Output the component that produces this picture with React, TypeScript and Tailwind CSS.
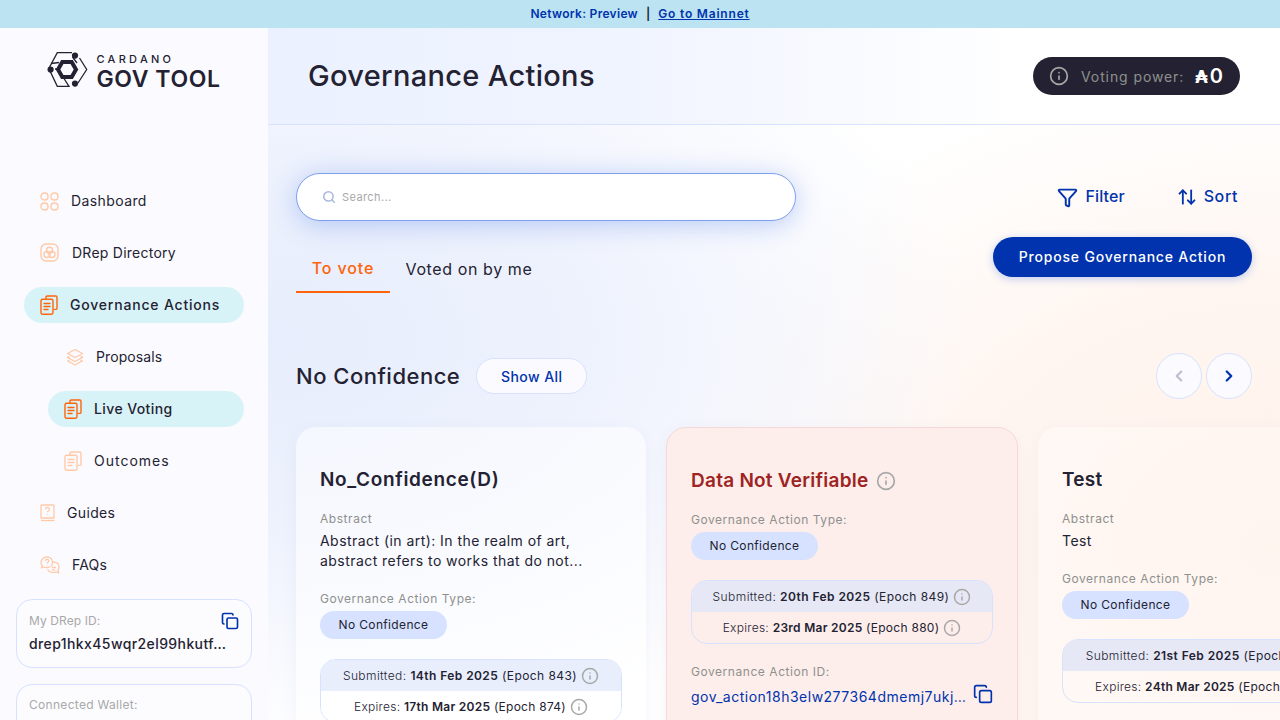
import React from "react";
import { Info, Copy, Funnel, ArrowUpDown, Search, ChevronLeft, ChevronRight } from "lucide-react";

const LIGHT = "#ffc9a8";
const HOT = "#ff640a";

function Logo() {
  return (
    <svg width="41" height="36" viewBox="0 0 41 36" fill="none" className="shrink-0">
      <g stroke="#242232" strokeWidth="1.3">
        <path d="M25 0.7H10.300L1.800 16.500 10.300 34.300H22L17 26.500" />
        <path d="M32.500 6L39.700 17.500 31 31" />
        <path d="M4 11.500L12 10.500M30 11L25.500 5M8 17h3" />
      </g>
      <path d="M15.300 10h9.400l4.300 7.500-4.300 7.500h-9.400L11 17.500z" stroke="#242232" strokeWidth="4" fill="none" />
      <circle cx="28" cy="3.600" r="3.100" fill="#242232" />
      <circle cx="3.600" cy="17.500" r="3.100" fill="#242232" />
      <circle cx="28" cy="31.600" r="3.100" fill="#242232" />
    </svg>
  );
}

function DashIcon() {
  return (
    <svg width="19" height="19" viewBox="0 0 19 19" fill="none" stroke={LIGHT} strokeWidth="1.4">
      <rect x="1" y="1" width="7" height="7" rx="3.200" />
      <rect x="11" y="1" width="7" height="7" rx="3.200" />
      <rect x="1" y="11" width="7" height="7" rx="3.200" />
      <rect x="11" y="11" width="7" height="7" rx="3.200" />
    </svg>
  );
}
function DrepIcon() {
  return (
    <svg width="20" height="20" viewBox="0 0 20 20" fill="none" stroke={LIGHT} strokeWidth="1.4">
      <rect x="1" y="1" width="17" height="17" rx="5" />
      <circle cx="9.500" cy="7.200" r="3" />
      <circle cx="7" cy="11.500" r="3" />
      <circle cx="12" cy="11.500" r="3" />
    </svg>
  );
}
function DocsIcon({ color }: { color: string }) {
  return (
    <svg width="18" height="20" viewBox="0 0 18 20" fill="none" stroke={color} strokeWidth="1.4" strokeLinecap="round">
      <path d="M6 3.500V2.200C6 1.500 6.500 1 7.200 1h8.600c.7 0 1.200.5 1.200 1.200v11c0 .7-.5 1.200-1.200 1.200h-1.300" />
      <rect x="1" y="4.200" width="12" height="15" rx="1.600" />
      <path d="M4 8.500h6M4 11.500h6M4 14.500h4" />
    </svg>
  );
}
function LayersIcon() {
  return (
    <svg width="18" height="18" viewBox="0 0 18 18" fill="none" stroke={LIGHT} strokeWidth="1.4" strokeLinejoin="round">
      <path d="M9 1.500L1.500 5.500 9 9.500l7.500-4z" />
      <path d="M3.500 8.500L1.500 9.500 9 13.500l7.500-4-2-1" />
      <path d="M3.500 12L1.800 13 9 17l7.200-4-1.700-1" />
    </svg>
  );
}
function GuideIcon() {
  return (
    <svg width="15" height="18" viewBox="0 0 15 18" fill="none" stroke={LIGHT} strokeWidth="1.3">
      <path d="M1 14V1.800C1 1.300 1.300 1 1.800 1h11.400c.5 0 .8.3.8.8V14z" />
      <path d="M1 16.500h13.500" />
      <path d="M5.600 5.200c0-2.400 3.800-2.200 3.800 0 0 1.500-1.900 1.400-1.900 3M7.500 10v.8" />
    </svg>
  );
}
function FaqIcon() {
  return (
    <svg width="20" height="18" viewBox="0 0 20 18" fill="none" stroke={LIGHT} strokeWidth="1.3" strokeLinejoin="round">
      <path d="M7 1c-3.300 0-6 2.400-6 5.400 0 1.300.5 2.400 1.300 3.300L1.500 12l2.800-1c.8.4 1.700.6 2.700.6 3.300 0 5.500-2.200 5.500-5.200S10.300 1 7 1z" />
      <path d="M13 6c3.300 0 6 2 6 5 0 1.200-.4 2.200-1 3l.8 3-3-1.200" />
      <path d="M15.800 15.800C13 17 9 16.500 7.500 13.500" />
      <path d="M5.200 5c0-2.200 3.600-2 3.600 0 0 1.300-1.800 1.200-1.800 2.600M7 9v.6" />
      <path d="M12 11.500h4M12 13.800h3" />
    </svg>
  );
}

type NavItem = { label: string; icon: React.ReactNode; active?: boolean; sub?: boolean; track: string };
const NAV: NavItem[] = [
  { label: "Dashboard", icon: <DashIcon />, track: "tracking-[0.4px]" },
  { label: "DRep Directory", icon: <DrepIcon />, track: "tracking-[0.25px]" },
  { label: "Governance Actions", icon: <DocsIcon color={HOT} />, active: true, track: "tracking-[0.8px]" },
  { label: "Proposals", icon: <span className="flex pl-[2px]"><LayersIcon /></span>, sub: true, track: "tracking-[0.1px]" },
  { label: "Live Voting", icon: <DocsIcon color={HOT} />, active: true, sub: true, track: "tracking-[0.4px]" },
  { label: "Outcomes", icon: <DocsIcon color={LIGHT} />, sub: true, track: "tracking-[1px]" },
  { label: "Guides", icon: <GuideIcon />, track: "tracking-[0.35px]" },
  { label: "FAQs", icon: <FaqIcon />, track: "tracking-[0.2px]" },
];

function InfoDot({ size = 18 }: { size?: number }) {
  return <Info size={size} strokeWidth={2} color="#a8a8a8" className="shrink-0" />;
}

function Label({ children }: { children: React.ReactNode }) {
  return <div className="text-[12px] leading-[18px] tracking-[0.55px] text-[#8e908e]">{children}</div>;
}

function TypePill() {
  return (
    <div className="mt-[3px] flex h-7 w-[127px] items-center justify-center rounded-full bg-[#d6e2ff] text-[12px] tracking-[0.35px] text-[#242232]">
      No Confidence
    </div>
  );
}

function Dates({ sub, exp, epochS, epochE, top, bottom }: { sub: string; exp: string; epochS: string; epochE: string; top: string; bottom: string }) {
  return (
    <div className="h-[64px] w-[302px] overflow-hidden rounded-[16px] border border-[#d6e2ff] text-[12px] text-[#242232]">
      <div className={"flex h-[31px] items-center justify-center gap-[4px] " + top}>
        <span className="tracking-[0.42px] whitespace-nowrap">
          <span className="font-light">Submitted: </span>
          <span className="font-semibold">{sub}</span>
          <span> (Epoch {epochS})</span>
        </span>
        <InfoDot />
      </div>
      <div className={"flex h-[31px] items-center justify-center gap-[4px] " + bottom}>
        <span className="tracking-[0.27px] whitespace-nowrap">
          <span className="font-light">Expires: </span>
          <span className="font-semibold">{exp}</span>
          <span> (Epoch {epochE})</span>
        </span>
        <InfoDot />
      </div>
    </div>
  );
}

function Abstract({ lines }: { lines: string[] }) {
  return (
    <div className="mt-[16px]">
      <Label>Abstract</Label>
      <div className="mt-[3px] text-[14px] leading-[20px] tracking-[0.45px] text-[#242232]">
        {lines.map((l) => (
          <div key={l}>{l}</div>
        ))}
      </div>
    </div>
  );
}

export default function App() {
  return (
    <div className="flex h-screen w-screen flex-col overflow-hidden font-[Inter,sans-serif] text-[#242232]">
      <div className="flex h-7 shrink-0 items-center justify-center gap-2 bg-[#bbe3f1] text-[12px] font-semibold text-[#0033ad]">
        <span className="tracking-[0.3px]">Network: Preview</span>
        <span className="text-[#242232]">|</span>
        <span className="tracking-[0.8px] underline">Go to Mainnet</span>
      </div>
      <div className="flex min-h-0 flex-1">
        <aside className="flex w-[268px] shrink-0 flex-col bg-[#fbfbff] px-4">
          <div className="flex h-[59px] items-start justify-center gap-2 pt-6">
            <Logo />
            <div className="flex flex-col pt-[1px]">
              <span className="text-[11px] leading-[13px] font-medium tracking-[3.300px] text-[#242232]">CARDANO</span>
              <span className="mt-[1px] text-[23px] leading-[24px] font-semibold tracking-[0.6px] whitespace-nowrap text-[#242232]">GOV TOOL</span>
            </div>
          </div>
          <nav className="mt-[96px] flex flex-col gap-4 px-2">
            {NAV.map((n) => (
              <div
                key={n.label}
                className={
                  "flex h-9 items-center gap-3 rounded-full pl-4 text-[14px] " +
                  n.track +
                  " " +
                  (n.sub ? "ml-6 " : "") +
                  (n.active ? "bg-[#d8f3f7] font-medium" : "")
                }
              >
                <span className="flex shrink-0">{n.icon}</span>
                <span className="pb-[1px] whitespace-nowrap">{n.label}</span>
              </div>
            ))}
          </nav>
          <div className="relative mt-4 h-[69px] shrink-0 rounded-[16px] border border-[#d6e2ff] bg-white/40 px-3 pt-[12px]">
            <div className="text-[12px] leading-[18px] tracking-[0.1px] text-[#a8a8a8]">My DRep ID:</div>
            <div className="mt-[3px] text-[14px] leading-[21px] font-medium tracking-[0.4px] whitespace-nowrap">drep1hkx45wqr2el99hkutf…</div>
            <Copy size={18} strokeWidth={2.2} color="#0033ad" className="absolute top-3 right-3" />
          </div>
          <div className="mt-4 h-[80px] shrink-0 rounded-[16px] border border-[#d6e2ff] bg-white/40 px-3 pt-[11px]">
            <div className="text-[12px] leading-[18px] tracking-[0.3px] text-[#a8a8a8]">Connected Wallet:</div>
          </div>
        </aside>

        <main className="min-w-0 flex-1 overflow-hidden bg-[radial-gradient(ellipse_70%_60%_at_0%_45%,#e6edfc_0%,#eef2fd_45%,transparent_100%),radial-gradient(ellipse_65%_70%_at_100%_75%,#fff1e9_0%,#fff6f1_55%,transparent_100%),linear-gradient(#ffffff,#ffffff)]">
          <header className="flex h-[97px] items-center justify-between border-b border-[#d6e2ff] bg-[linear-gradient(90deg,#ebf1ff_0%,#f0f4ff_35%,#ffffff_75%)] pr-10 pl-10">
            <h1 className="text-[29px] leading-[36px] font-medium tracking-[0.32px]">Governance Actions</h1>
            <div className="flex h-[38px] w-[207px] items-center rounded-full bg-[#242232] pl-[16px]">
              <Info size={20} strokeWidth={2} color="#a8a8a8" />
              <span className="ml-[12px] text-[14px] tracking-[0.9px] whitespace-nowrap text-[#8e908e]">Voting power:</span>
              <span className="ml-[11px] flex items-center gap-[2px] text-[20px] font-semibold text-white">
                <span className="font-['DejaVu_Sans',sans-serif] text-[18px] font-bold">₳</span>
                <span>0</span>
              </span>
            </div>
          </header>

          <div className="px-7 pt-12">
            <div className="flex items-start justify-between">
              <div>
                <div className="flex h-12 w-[500px] items-center gap-[6px] rounded-full border border-[#7f9ff0] bg-white pl-[25px] shadow-[0_4px_26px_rgba(51,102,226,0.3)]">
                  <Search size={14} strokeWidth={2.6} color="#a9b8de" />
                  <span className="text-[11px] tracking-[0.4px] text-[#a8a8a8]">Search...</span>
                </div>
                <div className="mt-6 flex h-12">
                  <div className="flex w-[94px] items-center justify-center border-b-2 border-[#ff640a] pb-[1px] text-[16px] font-medium tracking-[0.9px] text-[#ff640a]">
                    To vote
                  </div>
                  <div className="flex w-[158px] items-center justify-center pb-[1px] text-[16px] tracking-[0.6px]">Voted on by me</div>
                </div>
              </div>
              <div className="flex flex-col items-end">
                <div className="flex h-12 items-center pr-[14px] text-[16px] font-medium text-[#0033ad]">
                  <Funnel size={21} strokeWidth={2.2} color="#0033ad" />
                  <span className="ml-[7px] pb-[2px] tracking-[0.1px]">Filter</span>
                  <ArrowUpDown size={20} strokeWidth={2.2} color="#0033ad" className="ml-[52px]" />
                  <span className="ml-[7px] pb-[2px] tracking-[0.6px]">Sort</span>
                </div>
                <div className="mt-4 flex h-10 w-[259px] items-center justify-center rounded-full bg-[#0033ad] pb-[2px] text-[14px] font-medium tracking-[0.8px] text-white shadow-[0_2px_8px_rgba(51,102,226,0.3)]">
                  Propose Governance Action
                </div>
              </div>
            </div>

            <div className="mt-[60px] flex h-[46px] items-center">
              <h2 className="text-[22px] font-medium tracking-[0.5px]">No Confidence</h2>
              <div className="ml-4 flex h-9 w-[111px] items-center justify-center rounded-full border border-[#d6e2ff] bg-[#fbfbff] text-[14px] font-medium tracking-[0.45px] text-[#0033ad]">
                Show All
              </div>
              <div className="ml-auto flex gap-1">
                <div className="flex h-[46px] w-[46px] items-center justify-center rounded-full border border-[#d6e2ff] bg-[#fbfbff]">
                  <ChevronLeft size={18} strokeWidth={3} color="#bcbfd3" />
                </div>
                <div className="flex h-[46px] w-[46px] items-center justify-center rounded-full border border-[#d6e2ff] bg-[#fbfbff]">
                  <ChevronRight size={18} strokeWidth={3} color="#0033ad" />
                </div>
              </div>
            </div>

            <div className="mt-7 flex gap-5">
              <div className="h-[400px] w-[350px] shrink-0 rounded-[20px] bg-white/50 px-6 pt-[39px] shadow-[0_4px_16px_rgba(80,100,180,0.06)]">
                <div className="text-[19px] leading-[28px] font-semibold tracking-[0.65px]">No_Confidence(D)</div>
                <Abstract lines={["Abstract (in art): In the realm of art,", "abstract refers to works that do not..."]} />
                <div className="mt-[19px]">
                  <Label>Governance Action Type:</Label>
                  <TypePill />
                </div>
                <div className="mt-5">
                  <Dates sub="14th Feb 2025" exp="17th Mar 2025" epochS="843" epochE="874" top="bg-[#e8eefc]" bottom="bg-white" />
                </div>
              </div>

              <div className="h-[400px] w-[352px] shrink-0 rounded-[20px] border border-[#f6d8d8] bg-[#fdeeeb] px-6 pt-[39px] shadow-[0_4px_16px_rgba(80,100,180,0.06)]">
                <div className="flex items-center gap-2">
                  <div className="text-[19px] leading-[28px] font-semibold tracking-[0.25px] text-[#9e2323]">Data Not Verifiable</div>
                  <InfoDot size={20} />
                </div>
                <div className="mt-[16px]">
                  <Label>Governance Action Type:</Label>
                  <TypePill />
                </div>
                <div className="mt-5">
                  <Dates sub="20th Feb 2025" exp="23rd Mar 2025" epochS="849" epochE="880" top="bg-[#e6e8f5]" bottom="bg-transparent" />
                </div>
                <div className="mt-[19px]">
                  <Label>Governance Action ID:</Label>
                  <div className="mt-[6px] flex items-center justify-between">
                    <span className="text-[14px] leading-[20px] tracking-[0.5px] whitespace-nowrap text-[#0033ad]">gov_action18h3elw277364dmemj7ukj…</span>
                    <Copy size={20} strokeWidth={2} color="#0033ad" className="-mt-[6px]" />
                  </div>
                </div>
              </div>

              <div className="h-[400px] w-[350px] shrink-0 rounded-[20px] bg-white/30 px-6 pt-[39px] shadow-[0_4px_16px_rgba(80,100,180,0.06)]">
                <div className="text-[19px] leading-[28px] font-semibold tracking-[0.25px]">Test</div>
                <Abstract lines={["Test"]} />
                <div className="mt-[19px]">
                  <Label>Governance Action Type:</Label>
                  <TypePill />
                </div>
                <div className="mt-5">
                  <Dates sub="21st Feb 2025" exp="24th Mar 2025" epochS="850" epochE="881" top="bg-[#e6e8f5]" bottom="bg-transparent" />
                </div>
              </div>
            </div>
          </div>
        </main>
      </div>
    </div>
  );
}
